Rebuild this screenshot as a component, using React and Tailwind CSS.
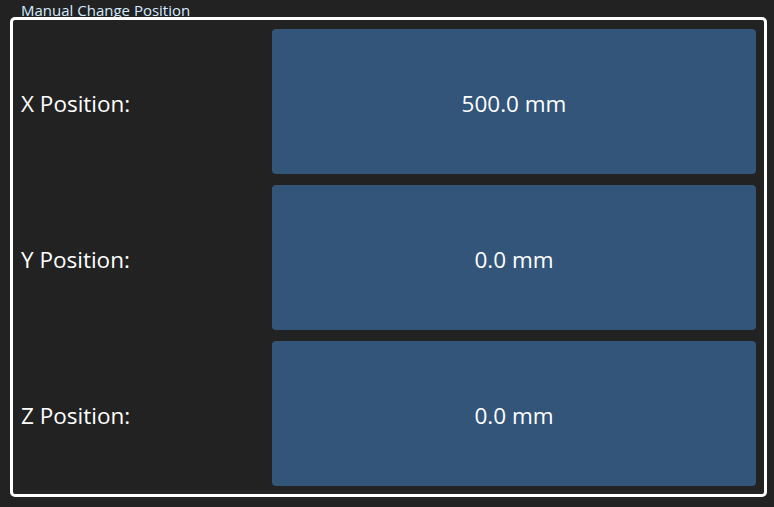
const rows = [
  { label: 'X Position:', value: '500.0 mm' },
  { label: 'Y Position:', value: '0.0 mm' },
  { label: 'Z Position:', value: '0.0 mm' },
]

export default function App() {
  return (
    <div
      className="w-[774px] h-[507px] bg-[#222222] flex flex-col text-white"
      style={{ fontFamily: '"Open Sans", "Noto Sans", sans-serif' }}
    >
      <div className="h-[17px] pl-[21px] flex items-start">
        <span className="text-[15px] leading-[20px] text-[#d6ebff]">Manual Change Position</span>
      </div>
      <div className="ml-[10px] w-[757px] h-[480px] border-[3px] border-white rounded-[5px] pt-[9px] pb-[8px] pl-[8px] pr-[8px] flex flex-col gap-[11px]">
        {rows.map((r) => (
          <div key={r.label} className="flex-1 flex">
            <div className="w-[251px] flex items-center text-[22.5px] pt-[5px]">{r.label}</div>
            <div className="flex-1 bg-[#33557a] rounded-[4px] flex items-center justify-center text-[22.5px] pt-[5px]">
              {r.value}
            </div>
          </div>
        ))}
      </div>
    </div>
  )
}
